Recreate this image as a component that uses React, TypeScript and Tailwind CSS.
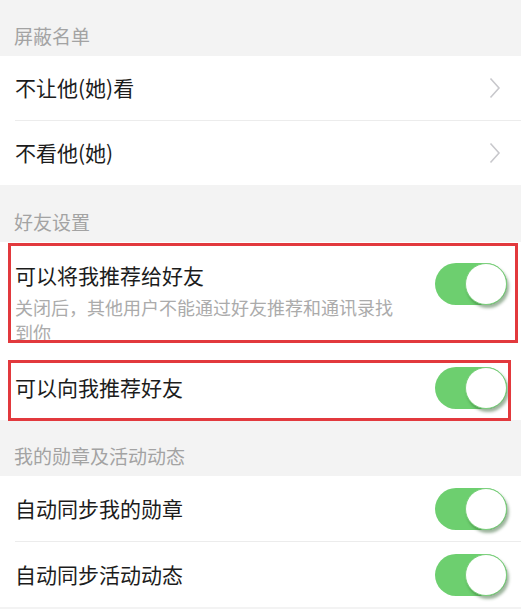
const font = { fontFamily: '"Noto Sans CJK SC", "Noto Sans", sans-serif' };

function SectionHeader({ title, h }: { title: string; h: string }) {
  return (
    <div className={`${h} flex items-end px-[14px] pb-[7px] bg-[#f3f3f3]`}>
      <span className="text-[19px] leading-[26px] text-[#a3a3a3]">{title}</span>
    </div>
  );
}

function Chevron() {
  return (
    <svg width="12" height="22" viewBox="0 0 12 22" className="mr-[20px]">
      <polyline points="1.5,1.5 10,11 1.5,20.5" fill="none" stroke="#c8c8cc" strokeWidth="1.6" />
    </svg>
  );
}

function Toggle() {
  return (
    <div className="relative w-[72px] h-[42px] rounded-full bg-[#6dcf6f] shrink-0 mr-[14px]">
      <div className="absolute right-0 top-0 w-[42px] h-[42px] rounded-full bg-white border border-[#7bcf7c] shadow-[2px_3px_3px_rgba(40,90,40,0.45)]" />
    </div>
  );
}

function Divider() {
  return <div className="ml-[15px] h-px bg-[#ececec]" />;
}

function LinkRow({ label }: { label: string }) {
  return (
    <div className="h-[64px] flex items-center justify-between pl-[15px]">
      <span className="text-[21px] text-[#1c1c1c]">{label}</span>
      <Chevron />
    </div>
  );
}

function SwitchRow({ label, marked }: { label: string; marked?: boolean }) {
  return (
    <div className="relative h-[65px] flex items-center justify-between pl-[15px]">
      <span className="text-[21px] text-[#1c1c1c]">{label}</span>
      <Toggle />
      {marked && (
        <div className="absolute left-[8px] top-[5px] w-[503px] h-[61px] border-[3px] border-[#e2393d]" />
      )}
    </div>
  );
}

export default function App() {
  return (
    <div className="w-[521px] h-[609px] bg-[#f3f3f3] overflow-hidden" style={font}>
      <SectionHeader title="屏蔽名单" h="h-[56px]" />
      <div className="bg-white">
        <LinkRow label="不让他(她)看" />
        <Divider />
        <LinkRow label="不看他(她)" />
      </div>

      <SectionHeader title="好友设置" h="h-[57px]" />
      <div className="bg-white">
        {/* recommend me to friends, with note */}
        <div className="relative h-[113px] flex justify-between pl-[15px] overflow-hidden">
          <div className="pt-[19px]">
            <div className="text-[21px] leading-[28px] text-[#1c1c1c]">可以将我推荐给好友</div>
            <div className="mt-[6px] max-w-[390px] text-[18px] leading-[25px] text-[#ababab]">
              关闭后，其他用户不能通过好友推荐和通讯录找到你
            </div>
          </div>
          <div className="pt-[21px]">
            <Toggle />
          </div>
          <div className="absolute left-[8px] top-[1px] w-[510px] h-[100px] border-[3px] border-[#e2393d]" />
        </div>
        <SwitchRow label="可以向我推荐好友" marked />
      </div>

      <SectionHeader title="我的勋章及活动动态" h="h-[56px]" />
      <div className="bg-white">
        <SwitchRow label="自动同步我的勋章" />
        <Divider />
        <SwitchRow label="自动同步活动动态" />
      </div>
    </div>
  );
}
